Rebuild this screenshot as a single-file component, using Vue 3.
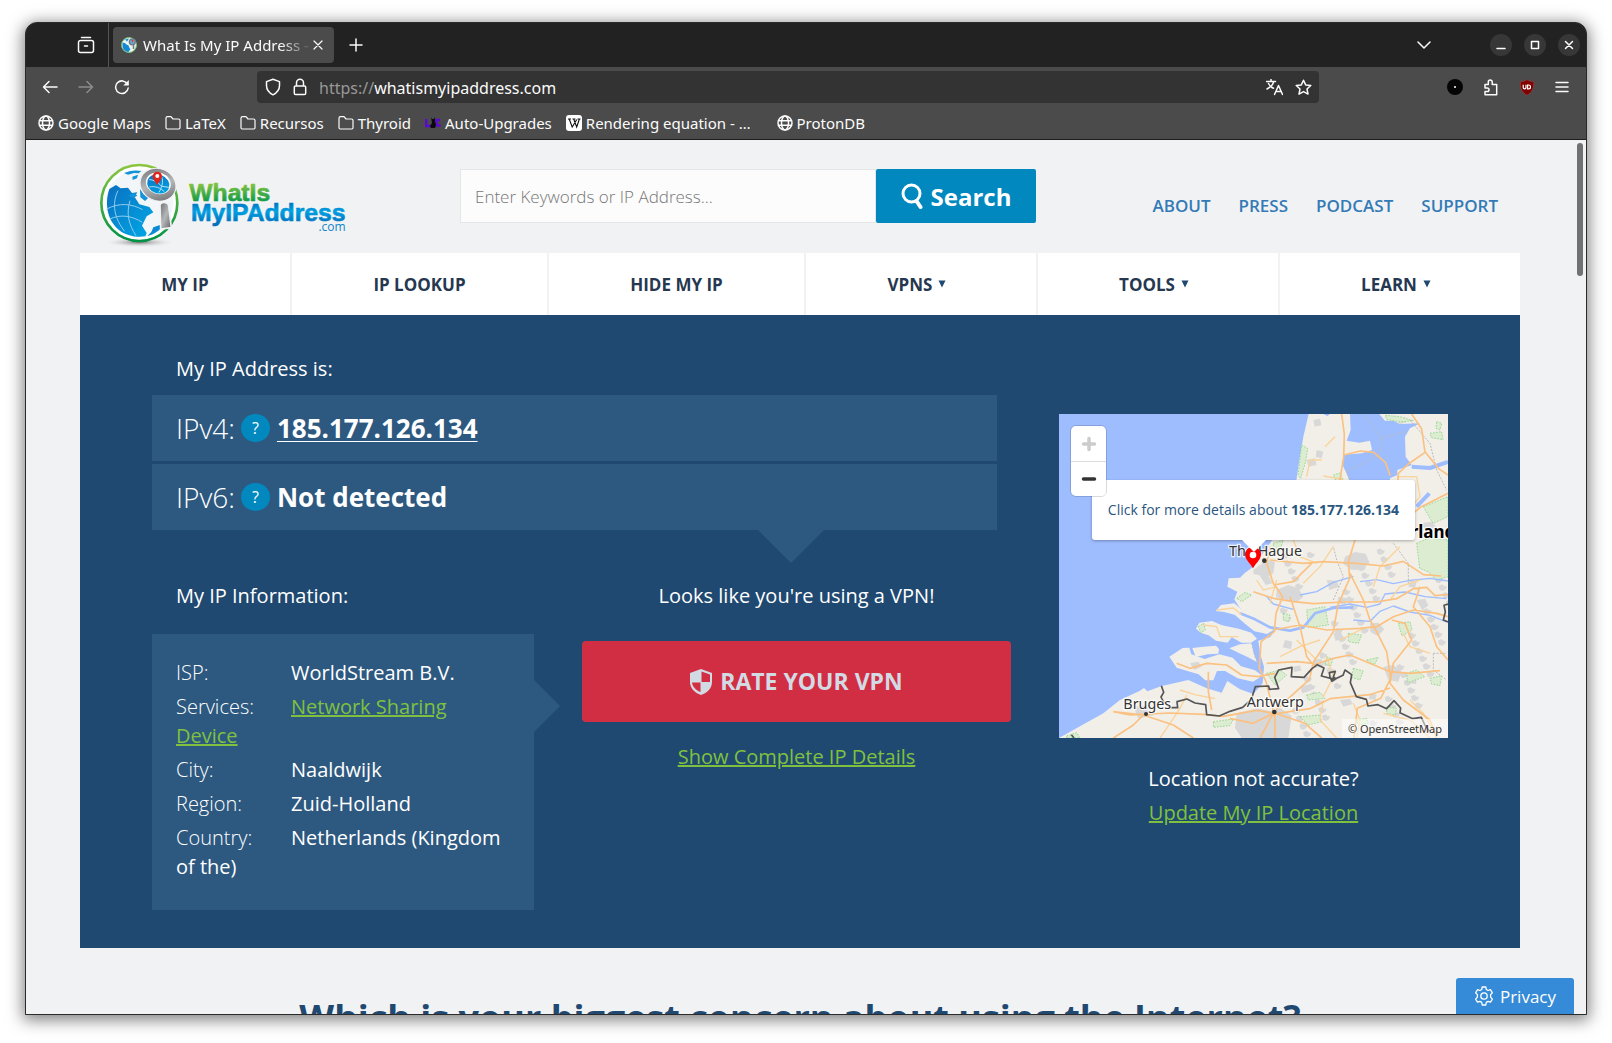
<script setup>
const bookmarks = [
  { label: 'Google Maps', icon: 'globe' },
  { label: 'LaTeX', icon: 'folder' },
  { label: 'Recursos', icon: 'folder' },
  { label: 'Thyroid', icon: 'folder' },
  { label: 'Auto-Upgrades', icon: 'cat' },
  { label: 'Rendering equation - …', icon: 'wiki', wide: true },
  { label: 'ProtonDB', icon: 'globe' },
]
const topLinks = ['ABOUT', 'PRESS', 'PODCAST', 'SUPPORT']
const menu = [
  { label: 'MY IP' },
  { label: 'IP LOOKUP' },
  { label: 'HIDE MY IP' },
  { label: 'VPNS', more: true },
  { label: 'TOOLS', more: true },
  { label: 'LEARN', more: true },
]
const info = [
  { label: 'ISP:', value: 'WorldStream B.V.' },
  { label: 'Services:', value: 'Network Sharing Device', link: true },
  { label: 'City:', value: 'Naaldwijk' },
  { label: 'Region:', value: 'Zuid-Holland' },
  { label: 'Country:', value: 'Netherlands (Kingdom of the)' },
]
</script>

<template>
  <div class="desktop">
    <div class="window">
      <header class="titlebar">
        <button class="tool tabs-view" aria-label="Recent browsing">
          <svg width="18" height="18" viewBox="0 0 18 18" class="line"><path d="M4.500 1.500h9M3.500 4.500h11a2 2 0 0 1 2 2v8a2 2 0 0 1-2 2h-11a2 2 0 0 1-2-2v-8a2 2 0 0 1 2-2zM7.500 10h3" /></svg>
        </button>
        <div class="tab">
          <svg width="16" height="16" viewBox="0 0 16 16"><circle cx="8" cy="8" r="7.5" fill="#e9f5f2" stroke="#79bf74" /><path d="M1.5 6c3-1 3 2 5 2s1 3 3 4l-2 3C3 14.5 1 11 1.5 6zM4 2.500l4-1-2 3z" fill="#1489d0" /><circle cx="11.3" cy="4.800" r="3" fill="#63a9d8" stroke="#757a80" stroke-width="1.3" /><path d="M10.500 3h2l-1 3z" fill="#e33" /><path d="M12.500 8v4" stroke="#777" stroke-width="1.5" /></svg>
          <span class="tab-title">What Is My IP Address - See</span>
          <button class="tool tab-close" aria-label="Close tab"><svg width="12" height="12" viewBox="0 0 12 12" class="line thin"><path d="M2 2l8 8M10 2l-8 8" /></svg></button>
        </div>
        <button class="tool new-tab" aria-label="New tab"><svg width="14" height="14" viewBox="0 0 14 14" class="line"><path d="M7 1v12M1 7h12" /></svg></button>
        <button class="tool all-tabs" aria-label="List all tabs"><svg width="14" height="14" viewBox="0 0 14 14" class="line"><path d="M1 4l6 6 6-6" /></svg></button>
        <div class="controls">
          <button class="round" aria-label="Minimize"><svg width="10" height="10" viewBox="0 0 10 10" class="line"><path d="M1 8.5h8" /></svg></button>
          <button class="round" aria-label="Maximize"><svg width="10" height="10" viewBox="0 0 10 10" class="line"><path d="M1.5 1.5h7v7h-7z" /></svg></button>
          <button class="round" aria-label="Close"><svg width="10" height="10" viewBox="0 0 10 10" class="line"><path d="M1.5 1.5l7 7M8.5 1.5l-7 7" /></svg></button>
        </div>
      </header>

      <div class="toolbar">
        <div class="history">
          <button class="tool" aria-label="Back"><svg width="16" height="16" viewBox="0 0 16 16" class="line"><path d="M15 8H1.5M7 2.5L1.5 8 7 13.5" /></svg></button>
          <button class="tool dim" aria-label="Forward"><svg width="16" height="16" viewBox="0 0 16 16" class="line"><path d="M1 8h13.5M9 2.5L14.5 8 9 13.5" /></svg></button>
          <button class="tool" aria-label="Reload"><svg width="16" height="16" viewBox="0 0 16 16" class="line"><path d="M13.5 5.200A6.300 6.300 0 1 0 14.200 9" /><path d="M14.8 1v5.500H9.300z" fill="#fbfbfb" stroke="none" /></svg></button>
        </div>
        <div class="urlbar">
          <svg width="16" height="18" viewBox="0 0 16 18" class="line"><path d="M8 1.2l6.500 2.400v3.900c0 4-2.500 7.300-6.500 9.300-4-2-6.500-5.300-6.500-9.300V3.600z" /></svg>
          <svg width="14" height="18" viewBox="0 0 14 18" class="line"><path d="M3.500 8V4.800a3.500 3.500 0 0 1 7 0V8M2.600 8h8.800a1.300 1.300 0 0 1 1.300 1.300v6a1.300 1.300 0 0 1-1.300 1.300H2.600a1.300 1.300 0 0 1-1.300-1.300v-6A1.300 1.300 0 0 1 2.600 8z" /></svg>
          <span class="url"><span class="scheme">https://</span>whatismyipaddress.com</span>
          <button class="tool" aria-label="Translate"><svg width="17" height="17" viewBox="0 0 17 17" class="line"><path d="M.5 2.500h9M5 .5v2M7.800 2.500C7 6 4 8.500 1 10M2.500 4.500c1 2 3 4 5 4.800M8.500 15.500l4-9 4 9M9.800 12.500h5.400" /></svg></button>
          <button class="tool" aria-label="Bookmark this page"><svg width="17" height="17" viewBox="0 0 17 17" class="line"><path d="M8.500 1.200l2.200 4.700 5.100.6-3.800 3.500 1 5.100-4.500-2.500L4 15.100l1-5.100L1.200 6.500l5.100-.6z" /></svg></button>
        </div>
        <div class="extensions">
          <button class="tool" aria-label="Dark mode"><svg width="16" height="16" viewBox="0 0 16 16"><circle cx="8" cy="8" r="8" fill="#050505" /><circle cx="8" cy="8" r="1" fill="#fff" /></svg></button>
          <button class="tool" aria-label="Extensions"><svg width="16" height="17" viewBox="0 0 16 17" class="line"><path d="M2 5.500h3.300V3a1.900 1.900 0 0 1 3.900 0v2.500h4.500v10.300H2v-3.300h2.200a1.800 1.800 0 0 0 0-3.600H2z" /></svg></button>
          <button class="tool" aria-label="uBlock Origin"><svg width="16" height="17" viewBox="0 0 16 17"><path d="M8 .8c2 1.300 4 1.900 6.700 2 0 6-1 10.200-6.700 13.400C2.300 13 1.300 8.800 1.300 2.800 4 2.700 6 2.100 8 .8z" fill="#800000" stroke="#a43a3a" stroke-width=".6" /><path d="M4.200 5.800v2.700a1.400 1.400 0 0 0 2.800 0V5.800M8.600 6v3.800h1a1.900 1.900 0 0 0 0-3.800z" fill="none" stroke="#fff" stroke-width="1.2" /></svg></button>
          <button class="tool" aria-label="Menu"><svg width="14" height="14" viewBox="0 0 14 14" class="line"><path d="M1 2.500h12M1 7h12M1 11.500h12" /></svg></button>
        </div>
      </div>

      <nav class="bookmarks" aria-label="Bookmarks">
        <a v-for="b in bookmarks" :key="b.label" href="#" :class="{ wide: b.wide }">
          <svg v-if="b.icon === 'globe'" width="16" height="16" viewBox="0 0 16 16" class="line"><circle cx="8" cy="8" r="7" /><ellipse cx="8" cy="8" rx="3.5" ry="7" /><path d="M1.5 5.700h13M1.500 10.300h13" /></svg>
          <svg v-else-if="b.icon === 'folder'" width="16" height="16" viewBox="0 0 16 16" class="line thin"><path d="M1 12.800V3.200a1.500 1.500 0 0 1 1.500-1.500H6l2 2.300h5.500A1.500 1.500 0 0 1 15 5.500v7.300a1.200 1.200 0 0 1-1.200 1.200H2.200A1.200 1.200 0 0 1 1 12.800z" /></svg>
          <svg v-else-if="b.icon === 'cat'" width="16" height="16" viewBox="0 0 16 16"><path d="M1.200 4v7H6M15 5h-3.500v5.500H15.500" fill="none" stroke="#5b08d0" stroke-width="2.4" /><path d="M6 2l1 2h2l1-2v4l1 4-1 3H6l-1-2 2-3z" fill="#0a0a0a" /></svg>
          <svg v-else width="16" height="16" viewBox="0 0 16 16"><rect width="16" height="16" rx="3" fill="#fff" /><path d="M2 4h3M6.500 4h3M11.500 4h3M3.200 4l3 8L10.800 4.500M7.700 4l3 8 2.700-8" fill="none" stroke="#111" stroke-width="1.1" /></svg>
          <span>{{ b.label }}</span>
        </a>
      </nav>

      <div class="viewport">
        <main class="page">
          <header class="site-header">
            <a href="#" class="logo" aria-label="WhatIsMyIPAddress.com">
              <svg width="254" height="90" viewBox="108 58 762 270">
                <defs>
                  <linearGradient id="ring" x1="0" y1="0" x2="0" y2="1"><stop offset="0" stop-color="#8cc63f" /><stop offset="1" stop-color="#009245" /></linearGradient>
                  <linearGradient id="sea" x1="0" y1="0" x2="1" y2="1"><stop offset="0" stop-color="#0b6fc0" /><stop offset="1" stop-color="#00a9e6" /></linearGradient>
                  <linearGradient id="steel" x1="0" y1="0" x2="1" y2="1"><stop offset="0" stop-color="#6d6e71" /><stop offset=".5" stop-color="#b5b6b8" /><stop offset="1" stop-color="#626366" /></linearGradient>
                  <linearGradient id="word" x1="0" y1="0" x2="0" y2="1"><stop offset=".2" stop-color="#82c341" /><stop offset=".85" stop-color="#0f9a48" /></linearGradient>
                  <linearGradient id="word2" x1="0" y1="0" x2="0" y2="1"><stop offset=".1" stop-color="#0071bc" /><stop offset=".45" stop-color="#00a0e3" /><stop offset=".9" stop-color="#006fbb" /></linearGradient>
                  <radialGradient id="shade"><stop offset="0" stop-color="#777" /><stop offset="1" stop-color="#f1f2f4" stop-opacity="0" /></radialGradient>
                </defs>
                <ellipse cx="238" cy="305" rx="108" ry="15" fill="url(#shade)" />
                <circle cx="238" cy="187" r="114" fill="#fff" stroke="url(#ring)" stroke-width="8" />
                <circle cx="238" cy="188" r="101" fill="#f2f6f9" />
                <path d="M148 145c-14 40-8 92 28 122 22 18 52 24 80 20l4-10-14-22 14-28 20-12-12-16-30-8-14-22 8-14-16 2-12-16-22 2-14-10z" fill="url(#sea)" />
                <path d="M192 97c20-9 38-9 52-6l-8 7-14-1-18 5zM217 108l17-6-3 11-13 5zM205 165l17-9 10 9-13 7zM240 145l12 17 18 5-15 14-14-11z" fill="#1593d8" />
                <path d="M262 286c18-4 32-14 42-24l-2-10-22 8-6 14z" fill="#0b8bd5" />
                <path d="M140 205c38-20 75-16 108 2M150 235c30-15 65-10 97 10M174 150c-20 40-10 85 20 122M210 180c-12 40-4 70 18 105" fill="none" stroke="#8fcdf0" stroke-width="3" />
                <path d="M300 195q0-10 12-10t14 10l8 66-32 4z" fill="url(#steel)" stroke="#f1f2f4" stroke-width="5" />
                <ellipse cx="294" cy="132" rx="55" ry="48" fill="url(#steel)" stroke="#f1f2f4" stroke-width="3" transform="rotate(25 294 132)" />
                <ellipse cx="295" cy="128" rx="38" ry="32" fill="#fff" transform="rotate(20 295 128)" />
                <ellipse cx="295" cy="130" rx="34" ry="28" fill="url(#sea)" transform="rotate(20 295 130)" />
                <path d="M268 117c14 0 27 9 37 20l22 3M268 139c18-4 34 3 45 14M305 108c6 14 1 31-8 47" fill="none" stroke="#b7e1f7" stroke-width="3" />
                <path d="M292 133c-9-14-14-18-14-27a14 13 0 0 1 28 0c0 9-7 15-14 27z" fill="#e2231a" />
                <circle cx="292" cy="106" r="6" fill="#fff" />
                <text x="388" y="180" class="wordmark" fill="url(#word)" stroke="url(#word)">WhatIs</text>
                <text x="393" y="242" class="wordmark" fill="url(#word2)" stroke="url(#word2)">MyIPAddress</text>
                <text x="857" y="270" class="dotcom" text-anchor="end" fill="#0f86c9">.com</text>
              </svg>
            </a>
            <form class="search" @submit.prevent>
              <input type="text" placeholder="Enter Keywords or IP Address..." aria-label="Enter Keywords or IP Address" />
              <button type="submit">
                <svg width="22" height="26" viewBox="0 0 22 26" fill="none" stroke="#fff"><circle cx="10.5" cy="10.5" r="8.5" stroke-width="3" /><path d="M15.5 18l4 6" stroke-width="4" stroke-linecap="round" /></svg>
                Search
              </button>
            </form>
            <nav class="top-links"><a v-for="l in topLinks" :key="l" href="#">{{ l }}</a></nav>
          </header>

          <nav class="menu">
            <a v-for="m in menu" :key="m.label" href="#" :class="{ more: m.more }">{{ m.label }}<svg v-if="m.more" width="8" height="8" viewBox="0 0 8 8"><path d="M.5.5h7L4 7.500z" fill="#1f4971" /></svg></a>
          </nav>

          <section class="hero">
            <div class="details">
              <h2>My IP Address is:</h2>
              <div class="addresses">
                <p><span class="kind">IPv4:</span><button class="help" aria-label="What is IPv4?">?</button><a href="#">185.177.126.134</a></p>
                <p><span class="kind">IPv6:</span><button class="help" aria-label="What is IPv6?">?</button><strong>Not detected</strong></p>
              </div>
              <div class="columns">
                <div>
                  <h2>My IP Information:</h2>
                  <div class="info">
                    <p v-for="i in info" :key="i.label"><span>{{ i.label }}</span><a v-if="i.link" href="#">{{ i.value }}</a><template v-else>{{ i.value }}</template></p>
                  </div>
                </div>
                <div class="vpn">
                  <h2>Looks like you're using a VPN!</h2>
                  <button class="rate">
                    <svg width="22" height="26" viewBox="0 0 22 26"><path d="M11 0l11 4v9c0 6-4.500 11-11 13C4.500 24 0 19 0 13V4z" fill="#d2dae3" /><path d="M11.500 2.500l8.500 3V13h-8.500zM2 13.500h8.500v9.600C5.500 21 2.500 17.500 2 13.500z" fill="#d22e43" /></svg>
                    RATE YOUR VPN
                  </button>
                  <a href="#">Show Complete IP Details</a>
                </div>
              </div>
            </div>

            <aside class="location">
              <div class="map">
                <svg class="tiles" viewBox="57 42 1167 972" preserveAspectRatio="xMidYMid slice">
                  <rect x="57" y="42" width="1167" height="972" fill="#9ebdff" />
                  <g fill="#f2efe9">
                    <path d="M806 42L850 42L862 48L870 42L930 42L932 90L920 122L958 128L990 122L996 150L965 160L912 164L905 190L922 225L935 260L990 300L1050 280L1050 235L1072 225L1072 210L1115 195L1097 170L1095 110L1110 85L1140 70L1080 72L1060 62L1035 62L1018 42H1224V1014H57L100 990L190 940L240 900L300 872L312 864L322 874L365 858L445 840L500 865L545 878L562 843L600 868L640 882L668 850L672 800L660 760L655 722L690 712L706 690L690 680L640 655L600 625L583 598L592 575L562 560L566 535L600 533L615 518L640 500L690 430L730 370L760 300L770 235L778 180L790 110Z" />
                    <path d="M527 633l16-18 40-5 20 17 38 15 28 26 32 22-20 12-38-8-27-22-32-28-32-8z" />
                    <path d="M468 686l10-18 38-5 30 13 50 10 38 12 17 18-18 12-28 0-30-16-12 16-35-6-22-16-24-8z" />
                    <path d="M457 744l34-4 37-3 9 10-2 14-32 2-36 8zM568 745l32-12 35-3 6 30 10 26-30-16-26-12z" />
                    <path d="M388 770l40-26 20-1 6 20 40 14 44-14 40 10 25 26 42 12 22 16-28 18-46-10-38-22-24 0-11 28-24 0-20-18-34-10-32-10z" />
                  </g>
                  <g fill="#d9d8d8">
                    <path d="M640 510l40-30 25 5-5 35-18 10-42-8zM710 570l35-15 30 10 15 25-22 18-35-8-25-8zM915 470l30-14 32 5 12 28-25 20-30 0-25-18zM590 940l60-15 40 8 30-10 35 25-10 66h-140l-20-30zM1030 800l30-5 25 20-10 30-30-5zM990 670l25-2 18 20-20 20-22-12zM880 700l20-5 12 18-25 10zM1130 600l25-4 10 20-18 15zM800 180l25-5 5 20-25 5zM830 150l20 5-5 20-18-4zM860 540l30 2 8 18-30 10zM1110 540l20 6-5 18-20-4zM280 920l50-4 10 30-45 10zM820 780l25-4 5 22-25 6zM735 720l22 5-4 22-25-5zM895 590l26 5-4 18-25-3zM1070 60l25-8 5 14-20 6zM1140 370l35-5 14 16-30 10zM780 860l22-6 10 18-25 8zM1110 830l20 2-2 20-25-3zM450 790l25-5 10 15-22 10zM655 520l30 5 12 25-20 5zM760 800l20-4 4 16-22 4zM900 900l30-4 8 16-28 8zM990 880l20 4-4 16-20-3zM820 60l20-4 4 20-20 4z" />
                    <path v-for="n in 72" :key="n" :d="`M${710 + (n * 197) % 510} ${440 + (n * 131) % 560}l10-5 8 6 7 0-4 9-9 5-9-3z`" />
                  </g>
                  <g fill="#dcecd0" stroke="#73cc73" stroke-width="2" stroke-dasharray="5 4">
                    <path d="M1130 430l35-15 59 5v110l-35 10-25-25-25-10zM1150 320l74-30v60l-45 20zM785 135l18 10-6 40-15 50-8-10zM800 630l55-10 10 55-60 8zM730 640l20 5-4 20-16-5zM680 820l40-10 20 15-35 30zM925 700l40 5-10 25-30-5zM940 805l30 8-10 26-25-6zM1100 820l30-10 24 20-50 18zM1075 670l35-5 6 25-30 18zM1170 100l35-5 4 24-35-6zM1190 65l15 5-5 20-12-5zM520 965l60-8-10 20-50 5zM780 950l60-5 5 20-40 10zM800 885l40-8 15 18-50 5zM980 780l35-8-12 22zM700 430l30-10-10 30-20 10zM590 595l25-18 20 8-30 20zM475 680l16-10 5 20-14 8zM860 770l18 8-6 20-16-6zM1040 920l30 5-5 20-25-5zM1170 835l35-8-5 30-25-5zM950 960l30-5 5 15-30 5zM880 225l20-6 10 22-20 6zM1036 46l44 4 40 12-40 4-40-8zM80 1008l30-10 10 16h-40z" />
                  </g>
                  <g fill="none" stroke="#9ebdff" stroke-width="9" stroke-linejoin="round">
                    <path d="M600 640l45 18 45 24 60 10 40-10 35-42 55-16 60-2" stroke-width="8" />
                    <path d="M1130 320l38-40M1115 200l55 4 54-18" stroke-width="12" />
                    <path d="M870 622l60-10 50 10 40-10 15-30 60-6 60 14 64 6M940 660l50 4 30-30 40-16 50 18 60 10 50 20M680 590l20 22 60 16M780 585l50-10 50-28 60-18M960 545l50-6 50 12 50-10 60-6 54 8" stroke-width="4" />
                  </g>
                  <g fill="none" stroke="#bbb" stroke-width="3" stroke-dasharray="6 4">
                    <path d="M970 42l54 72 80-20M1024 114l-5 50-100 52 10 24M880 600l30-70-20-50-10-40M1060 430l45 60 0 60M635 730l10 40 20 40M1180 760l40 0M1180 760l0 50 40 30M1110 60l60 70 20 80 30 60" />
                  </g>
                  <g fill="none" stroke="#fad39a" stroke-width="4">
                    <path d="M800 230l10-50 35 0M850 228l60 10M855 140l30-30M1070 230l60 0 10 60-50 60M650 540l20 30 40-10M530 630l50-6 25 20M490 675l40 5 10 30 55 0M420 870l45 14 60 12M440 885l-20 40-40 60-20 29M720 770l60-30 60-20M860 770l20 60-30 60M770 720l60 60M900 720l70-35M1050 600l30-40 60-20M1090 700l20 40 60 20M1110 900l40 40 30 50M940 910l20 50-10 54M1030 940l80 20 60 54M850 900l-10 60 50 54M690 610l20-70M880 440l-40 60-50 50M760 420l20 50 50 20M1000 560l20-60 60-60" />
                  </g>
                  <g fill="none" stroke="#fbc181" stroke-width="5" stroke-linejoin="round">
                    <path d="M905 42l8 60-2 70-10 60-10 70M911 165l50-12 40 4 35 30 15 40M1115 42l30 45 10 70-50 35-30 28-2 40M1155 155l40 50 29 20M1224 280l-80 40-50 40-60 60M690 440l-10 50 20 60 28 40-20 50-5 55-40 30-5 80 20 40 20 80 5 25M690 480l100 10 60-5 100 5 80 8 60-14 60 40 54 4M700 555l60-10 40-40 20-20M640 575l60 20 60 10 60 6 90-5 100 0 60-10 50-30 40-4 25 25 54-5M945 420l-20 65 4 50-35 80-14 80-60 92-12 52-100 90M930 520l40 80 20 60 20 35 30 60 12 80-30 60-70 30-10 89M750 590l30 90 20 90 20 25 60-20 50-10 120 50 60 5 90-8M700 690l80-15 80 15 100-5 50-5 50-30 60-20 70 10 34 10M1055 660l40 10 20 50-55 70-10 60M1140 560l-20 60 50 60 20 60 34 40M410 790l40 15 50-15 60 5 45 30 50 5 50-10M505 815v60l10 55M220 935l50 10 120-6 100 4 60 6 100-18 60 10 100-15 60-30 120-12 60-20M220 935l90 10 90 30 60 39M310 945l-30 30-60 39M570 955l70 15 60-30-40 74M705 940l90 30 50 44M705 940v74M1050 850l40 50 80 60 20 54M680 790l90-5 50 5" />
                  </g>
                  <path d="M364 857l7 20-8 14 6 12 20 20 24 0-2-18 30-8 24 12 32 5 3 30 38 4 32-14 38-12 26-24 12-38 40-2 2 10 28-2-12-34 12-22 40-8-2 28 38 2 24-26 16-12 20 10-8 24 40 10 25-12 6-16 20 14-4 24 18 42 30 8 5 20 30-4 26 12 22-24 20 22-2 14 38 18 26-4 10 22 14 20M868 818l18-4-6 18 8 4-12 8-6-12zM1224 612l-12 4 4 20-6 24 14 6M94 1004l8 10" fill="none" stroke="#555" stroke-width="5" stroke-linejoin="round" />
                  <g class="place">
                    <text x="1112" y="413" class="country">rland</text>
                    <text x="567" y="467">The Hague</text>
                    <text x="250" y="927">Bruges</text>
                    <text x="620" y="921">Antwerp</text>
                  </g>
                  <g fill="#333"><circle cx="673" cy="482" r="7" /><circle cx="318" cy="942" r="6" /><circle cx="703" cy="936" r="7" /></g>
                  <path d="M639 505c-10-17-24-27-24-42a24 22 0 0 1 48 0c0 15-14 25-24 42z" fill="#f00" /><circle cx="639" cy="465" r="10" fill="#fff" />
                </svg>
                <a href="#" class="popup">Click for more details about <b>185.177.126.134</b></a>
                <div class="zoom">
                  <button disabled aria-label="Zoom in"><svg width="16" height="16" viewBox="0 0 16 16"><path d="M8 2.500v11M2.500 8h11" /></svg></button>
                  <button aria-label="Zoom out"><svg width="16" height="16" viewBox="0 0 16 16"><path d="M2.500 8h11" /></svg></button>
                </div>
                <small>© OpenStreetMap</small>
              </div>
              <p>Location not accurate?</p>
              <p><a href="#">Update My IP Location</a></p>
            </aside>
          </section>

          <h1>Which is your biggest concern about using the Internet?</h1>
        </main>
        <button class="privacy">
          <svg width="20" height="20" viewBox="0 0 20 20" fill="none" stroke="#fff" stroke-width="1.3" stroke-linejoin="round"><path d="M8.200 1h3.600l.5 2.500 1.700 1L16.400 3.700l1.900 3-1.700 1.900v2.500l1.800 2-1.900 3.100-2.500-.8-1.700 1-.5 2.600H8.200l-.5-2.600-1.700-1-2.500.8-1.900-3.100 1.800-2V8.600L1.700 6.700l1.900-3L6 4.500l1.700-1z" /><circle cx="10" cy="10" r="3.2" /></svg>
          Privacy
        </button>
        <div class="scrollbar"></div>
      </div>
    </div>
  </div>
</template>

<style>
body {
  margin: 0;
  background: #fff;
}
</style>

<style scoped>
* {
  box-sizing: border-box;
}
svg {
  flex: none;
  display: block;
}
button {
  font: inherit;
  border: 0;
  cursor: pointer;
}
h1,
h2,
p {
  margin: 0;
}
.desktop {
  display: flex;
  height: 100vh;
  padding: 22px 25px 28px;
  font-family: 'Open Sans', 'Noto Sans', sans-serif;
}
.window {
  flex: 1;
  min-width: 0;
  display: flex;
  flex-direction: column;
  overflow: hidden;
  border: 1px solid #2b2b2b;
  border-radius: 12px 12px 0 0;
  background: #4b4b4b;
  box-shadow: 0 3px 16px 2px rgba(0, 0, 0, 0.5);
  color: #fbfbfb;
}
.titlebar,
.toolbar,
.bookmarks {
  flex: none;
  display: flex;
  align-items: center;
  font: 16px 'Noto Sans', sans-serif;
}
.tool {
  display: flex;
  padding: 0;
  background: none;
  color: inherit;
}
.line {
  fill: none;
  stroke: currentColor;
  stroke-width: 1.5;
  stroke-linecap: round;
  stroke-linejoin: round;
}
.thin {
  stroke-width: 1.2;
}
.dim {
  color: #8d8d8d;
}
.titlebar {
  height: 44px;
  background: #222;
  padding-right: 6px;
}
.tabs-view {
  height: 100%;
  align-items: center;
  padding: 0 13px 0 51px;
  border-right: 1px solid #555;
}
.tab {
  display: flex;
  align-items: center;
  width: 221px;
  height: 36px;
  margin-left: 4px;
  padding: 0 10px 0 8px;
  border-radius: 4px;
  background: #4b4b4b;
}
.tab-title {
  flex: 1;
  min-width: 0;
  margin-left: 6px;
  overflow: hidden;
  white-space: nowrap;
  font-size: 15px;
  mask-image: linear-gradient(to left, transparent, #000 32px);
}
.new-tab {
  margin-left: 15px;
}
.all-tabs {
  margin-left: auto;
}
.controls {
  display: flex;
  gap: 12px;
  margin-left: 59px;
}
.round {
  display: flex;
  align-items: center;
  justify-content: center;
  width: 22px;
  height: 22px;
  padding: 0;
  border-radius: 50%;
  background: #373737;
  color: #fff;
}
.toolbar {
  height: 40px;
  padding: 0 17px 0 16px;
}
.history {
  display: flex;
  gap: 20px;
  width: 215px;
}
.urlbar {
  flex: 1;
  display: flex;
  align-items: center;
  height: 32px;
  padding: 0 7px 0 8px;
  gap: 12px;
  border-radius: 4px;
  background: #333;
}
.url {
  flex: 1;
  padding-top: 1px;
}
.scheme {
  color: #989898;
}
.extensions {
  display: flex;
  align-items: center;
  gap: 20px;
  margin-left: 128px;
}
.bookmarks {
  height: 33px;
  padding: 0 12px;
  gap: 14px;
  border-bottom: 1px solid #1c1c1c;
  font-size: 15px;
}
.bookmarks a {
  display: flex;
  align-items: center;
  gap: 4px;
  color: inherit;
  text-decoration: none;
  white-space: nowrap;
}
.bookmarks .wide {
  padding-right: 12px;
}
.viewport {
  flex: 1;
  min-height: 0;
  position: relative;
  overflow: hidden;
  padding: 0 12px 0 0;
  background: #f1f2f4;
}
.page {
  max-width: 1440px;
  margin: 0 auto;
}
.site-header {
  display: grid;
  grid-template-columns: 364fr 576fr minmax(0, 462fr);
  padding: 0 22px 0 16px;
  height: 113px;
}
.logo {
  padding-top: 20px;
}
.wordmark {
  font: bold 74px 'Liberation Sans', Arial, sans-serif;
  stroke-width: 2px;
  stroke-linejoin: round;
}
.dotcom {
  font: 36px 'Open Sans', sans-serif;
}
.search {
  display: flex;
  height: 54px;
  margin-top: 29px;
}
.search input {
  flex: 1;
  min-width: 0;
  border: 1px solid #e4e5e6;
  background: #fcfcfc;
  padding: 0 14px;
  font: 300 17px 'Open Sans', sans-serif;
}
.search input::placeholder {
  color: #777;
}
.search button {
  display: flex;
  align-items: center;
  justify-content: center;
  gap: 8px;
  width: 160px;
  border-radius: 2px;
  background: #0088bf;
  color: #fff;
  font-size: 24px;
  font-weight: 700;
}
.top-links {
  display: flex;
  justify-content: flex-end;
  gap: 28px;
  margin-top: 54px;
  font-size: 17px;
  line-height: 24px;
  font-weight: 600;
}
.top-links a {
  color: #337ab7;
  text-decoration: none;
}
.menu {
  display: grid;
  grid-template-columns: 210fr 255fr 255fr 230fr 240fr 240fr;
  gap: 2px;
  height: 62px;
}
.menu a {
  display: flex;
  align-items: center;
  justify-content: center;
  gap: 6px;
  background: #fff;
  color: #263850;
  font-size: 17px;
  font-weight: 700;
  text-decoration: none;
}
.menu .more {
  padding-right: 8px;
}
.hero {
  display: grid;
  grid-template-columns: 859fr 389fr;
  gap: 48px;
  padding: 38px 5%;
  background: #1f4971;
  color: #fff;
  font-size: 20px;
  line-height: 29px;
}
.hero h2 {
  padding-left: 24px;
  font-size: 20px;
  font-weight: 400;
  line-height: 32px;
}
.hero a {
  color: #7fc13e;
}
.addresses {
  position: relative;
  display: grid;
  gap: 3px;
  margin: 10px 14px 0 0;
}
.addresses::after {
  content: '';
  position: absolute;
  top: 100%;
  left: 606px;
  border: 33px solid transparent;
  border-top-color: #2d5980;
  border-bottom: 0;
}
.addresses p {
  display: flex;
  align-items: center;
  height: 66px;
  padding-left: 24px;
  background: #2d5980;
  font-size: 26px;
}
.addresses a,
.addresses strong {
  font-weight: 700;
}
.addresses a {
  color: #fff;
  text-underline-offset: 3px;
  text-decoration-thickness: 1px;
}
.kind {
  font-size: 28px;
  font-weight: 300;
}
.help {
  width: 29px;
  height: 28px;
  margin: 0 7px 0 6px;
  padding: 0;
  border-radius: 50%;
  background: #0088bf;
  color: #fff;
  font-size: 16px;
}
.columns {
  display: grid;
  grid-template-columns: 382fr 429fr;
  gap: 48px;
  margin-top: 50px;
}
.info {
  position: relative;
  margin-top: 22px;
  padding: 24px 24px 18px;
  min-height: 276px;
  background: #2d5980;
}
.info::after {
  content: '';
  position: absolute;
  left: 100%;
  top: 46px;
  border: 26px solid transparent;
  border-left-color: #2d5980;
  border-right: 0;
}
.info p {
  margin-bottom: 5px;
}
.info span {
  display: inline-block;
  width: 115px;
  font-weight: 300;
}
.vpn {
  display: flex;
  flex-direction: column;
  align-items: center;
}
.vpn h2 {
  padding: 0;
}
.rate {
  display: flex;
  align-items: center;
  justify-content: center;
  gap: 8px;
  width: 100%;
  height: 81px;
  margin: 29px 0 20px;
  border-radius: 4px;
  background: #d22e43;
  color: #d2dae3;
  font-size: 23px;
  font-weight: 700;
}
.location {
  padding-top: 61px;
  text-align: center;
}
.map {
  position: relative;
  height: 324px;
  margin-bottom: 26px;
  overflow: hidden;
}
.location p {
  margin-bottom: 5px;
}
.tiles {
  width: 100%;
  height: 100%;
}
.place {
  font: 43px 'Noto Sans', sans-serif;
  fill: #333;
  stroke: #fff;
  stroke-width: 7px;
  stroke-opacity: 0.8;
  paint-order: stroke;
}
.country {
  font-size: 51px;
  font-weight: 700;
  fill: #000;
}
.popup {
  position: absolute;
  top: 66px;
  left: 33px;
  right: 33px;
  line-height: 60px;
  border-radius: 3px;
  background: #fff;
  box-shadow: 0 1px 3px rgba(0, 0, 0, 0.3);
  font-size: 14px;
  text-decoration: none;
  white-space: nowrap;
}
.hero .popup {
  color: #29567f;
}
.popup::after {
  content: '';
  position: absolute;
  top: 100%;
  left: 50%;
  margin-left: -12px;
  border: 12px solid transparent;
  border-top-color: #fff;
  border-bottom: 0;
}
.zoom {
  position: absolute;
  top: 11px;
  left: 11px;
  border: 1px solid rgba(0, 0, 0, 0.15);
  border-radius: 6px;
  overflow: hidden;
}
.zoom button {
  display: flex;
  align-items: center;
  justify-content: center;
  width: 35px;
  height: 35px;
  padding: 0;
  background: #fff;
}
.zoom button + button {
  border-top: 1px solid #ddd;
}
.zoom svg {
  stroke: #333;
  stroke-width: 3.5;
  stroke-linecap: round;
}
.zoom :disabled svg {
  stroke: #ccc;
}
.map small {
  position: absolute;
  right: 0;
  bottom: 0;
  padding: 0 6px;
  background: rgba(255, 255, 255, 0.5);
  color: #333;
  font: 11px/19px 'Noto Sans', sans-serif;
}
h1 {
  margin-top: 44px;
  color: #1f4971;
  font-size: 36px;
  line-height: 52px;
  text-align: center;
  white-space: nowrap;
}
.privacy {
  position: absolute;
  right: 12px;
  bottom: 0;
  display: flex;
  align-items: center;
  gap: 6px;
  height: 36px;
  padding: 0 18px;
  border-radius: 3px 3px 0 0;
  background: #358bd7;
  color: #fff;
  font-size: 17px;
}
.scrollbar {
  position: absolute;
  top: 3px;
  right: 3px;
  width: 6px;
  height: 133px;
  border-radius: 3px;
  background: #6f7173;
}
</style>
